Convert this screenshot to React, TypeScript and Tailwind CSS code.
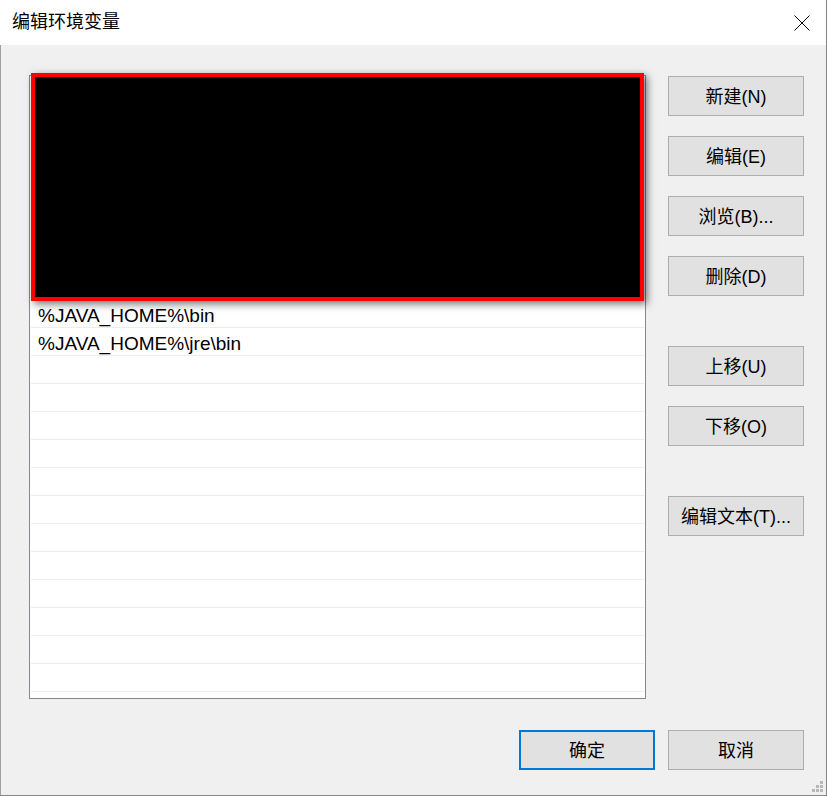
const FONT = "font-['Liberation_Sans','Noto_Sans_CJK_SC',sans-serif]";

const paths = ['%JAVA_HOME%\\bin', '%JAVA_HOME%\\jre\\bin'];

function WinButton({ label, primary }: { label: string; primary?: boolean }) {
  return (
    <button
      className={`w-[136px] h-[40px] bg-[#e1e1e1] text-[18px] text-black leading-none flex items-center justify-center pt-[2px] ${
        primary ? 'border-2 border-[#0078d7]' : 'border border-[#adadad]'
      }`}
    >
      {label}
    </button>
  );
}

function Grip() {
  const dots = [
    [8, 0],
    [4, 4],
    [8, 4],
    [0, 8],
    [4, 8],
    [8, 8],
  ];
  return (
    <svg width="11" height="11" className="absolute right-[3px] bottom-[3px]">
      {dots.map(([x, y], i) => (
        <rect key={i} x={x} y={y} width="3" height="3" fill="#b8b8b8" />
      ))}
    </svg>
  );
}

export default function App() {
  // 8 rows hidden under the redaction box, then the two visible entries, then blanks
  const rows = [...Array(8).fill(''), ...paths, ...Array(12).fill('')];

  return (
    <div className={`w-[827px] h-[796px] flex flex-col bg-[#f0f0f0] border-r border-b border-[#858585] ${FONT}`}>
      <div className="h-[45px] bg-white flex items-center justify-between pl-[12px] pr-[16px] shrink-0">
        <span className="text-[18px] text-black">编辑环境变量</span>
        <svg width="16" height="16" viewBox="0 0 16 16" className="mt-[1px]">
          <path d="M0.5 0.5 L15.5 15.5 M15.5 0.5 L0.5 15.5" stroke="#000" strokeWidth="1" />
        </svg>
      </div>

      <div className="relative flex-1 flex flex-col border-l border-[#a0a0a0]">
        <div className="flex pt-[30px] pl-[28px] gap-[22px]">
          <div className="relative w-[617px] h-[624px] bg-white border border-[#828790]">
            {rows.map((text, i) => (
              <div
                key={i}
                className="h-[28px] mx-[1px] border-b border-[#ededed] pl-[7px] pt-[2px] text-[19px] leading-[27px] text-black whitespace-nowrap"
              >
                {text}
              </div>
            ))}
            <div className="absolute left-[1px] -top-[3px] w-[613px] h-[228px] bg-black border-4 border-[#ff0000] shadow-[3px_3px_8px_rgba(0,0,0,0.55)]" />
          </div>

          <div className="flex flex-col pt-[1px]">
            <div className="flex flex-col gap-[20px]">
              <WinButton label="新建(N)" />
              <WinButton label="编辑(E)" />
              <WinButton label="浏览(B)..." />
              <WinButton label="删除(D)" />
            </div>
            <div className="flex flex-col gap-[20px] mt-[50px]">
              <WinButton label="上移(U)" />
              <WinButton label="下移(O)" />
            </div>
            <div className="mt-[50px]">
              <WinButton label="编辑文本(T)..." />
            </div>
          </div>
        </div>

        <div className="flex justify-end gap-[13px] pr-[22px] mt-[31px]">
          <WinButton label="确定" primary />
          <WinButton label="取消" />
        </div>

        <Grip />
      </div>
    </div>
  );
}
